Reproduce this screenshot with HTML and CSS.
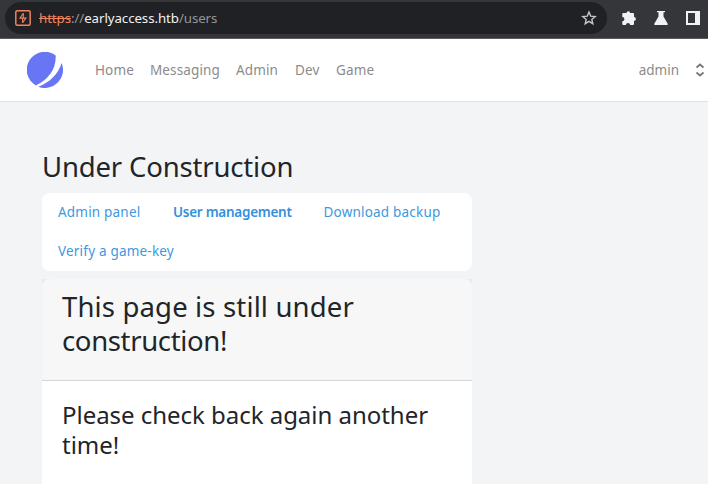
FILE: index.html
```html
<!DOCTYPE html>
<html lang="en">
<head>
<meta charset="utf-8">
<title>Under Construction</title>
<link rel="stylesheet" href="styles.css">
</head>
<body>
<header class="toolbar">
  <div class="address">
    <svg class="site-icon" width="16" height="16" viewBox="0 0 16 16"><rect x=".8" y=".8" width="14.4" height="14.4" rx="1.5" fill="none" stroke="#ee8460" stroke-width="1.5"/><path d="M8.3 3.2 4.9 8.1h6L7.6 12.8M8.3 3v5M7.6 8v5" fill="none" stroke="#ee8460" stroke-width="1.1"/></svg>
    <span class="url"><span class="scheme">https</span>://<span class="host">earlyaccess.htb</span>/users</span>
    <svg class="star" width="16" height="16" viewBox="0 0 16 16"><path d="m8 2 1.7 4.1 4.5.4-3.4 2.9 1 4.3L8 11.4l-3.8 2.3 1-4.3-3.4-2.9 4.5-.4z" fill="none" stroke="#c5c6c9" stroke-width="1.4"/></svg>
  </div>
  <div class="tools">
    <svg width="16" height="16" viewBox="0 0 16 16"><path d="M2.3 3h3.2a1.8 1.8 0 0 1 3.6 0H12q1 0 1 1v3a1.9 1.9 0 0 1 0 3.8V14q0 1-1 1H9.1a2.1 2.1 0 0 0-4.2 0H2.3q-1 0-1-1v-2.7a2.1 2.1 0 0 0 0-4.2V4q0-1 1-1z" fill="#f1f2f4"/></svg>
    <svg width="16" height="16" viewBox="0 0 16 16"><path d="M4 1h8v1.3h-1.5v4.2l4.2 7.2q.5 1.3-.8 1.3H2.1q-1.3 0-.8-1.3l4.2-7.2V2.3H4z" fill="#f1f2f4"/></svg>
    <svg width="16" height="16" viewBox="0 0 16 16"><path fill-rule="evenodd" d="M1 1h14v14H1zM3 3v10h7V3z" fill="#f1f2f4"/></svg>
  </div>
</header>
<nav class="navbar">
  <svg class="logo" width="36" height="36" viewBox="0 0 36 36"><path d="M8.8 33.4A18 18 0 1 1 28.7 3.5C29.2 16.5 22 27.5 8.8 33.4z" fill="#6875f5"/><path d="M11.3 34.7C22.5 30.5 31 22.5 34.6 11A18 18 0 0 1 11.3 34.7z" fill="#6875f5"/></svg>
  <div class="links"><a class="home">Home</a><a class="messaging">Messaging</a><a class="admin">Admin</a><a class="dev">Dev</a><a class="game">Game</a></div>
  <div class="account"><span>admin</span><svg width="10" height="14" viewBox="0 0 10 14"><path d="m1.5 4.5 3.5-3 3.5 3m-7 5 3.5 3 3.5-3" fill="none" stroke="#777" stroke-width="1.8"/></svg></div>
</nav>
<main class="content">
  <h1 class="title">Under Construction</h1>
  <div class="tabs">
    <a class="tab panel">Admin panel</a><a class="tab active">User management</a><a class="tab backup">Download backup</a><a class="tab verify">Verify a game-key</a>
  </div>
  <section class="card">
    <div class="card-frame">
      <h2 class="card-header">This page is still under<br><span class="last-word">construction!</span></h2>
    </div>
    <h3 class="card-body">Please check back again another<br>time!</h3>
  </section>
</main>
</body>
</html>
```
FILE: styles.css
```css
* { box-sizing: border-box; }
body { margin: 0; height: 484px; overflow: hidden; background: #f3f4f6; color: #212529; font-family: "Noto Sans", sans-serif; font-weight: 400; }
h1, h2, h3 { margin: 0; font-weight: 400; }
svg { display: block; flex: none; }
.toolbar { display: flex; height: 39px; background: #35363a; border-bottom: 1px solid #5b5962; }
.address { display: flex; align-items: center; width: 602px; height: 32px; margin: 2px 0 0 5px; padding: 0 10px; border-radius: 16px; background: #202124; }
.url { margin-left: 8px; font-size: 13.3px; line-height: 18px; letter-spacing: -.08px; color: #92969a; white-space: nowrap; }
.scheme { color: #ee8460; text-decoration: line-through; }
.host { color: #f1f2f4; }
.star { margin-left: auto; }
.tools { display: flex; gap: 16px; margin: 10px 0 0 14px; }
.navbar { display: flex; align-items: center; height: 63px; padding: 0 3px 0 27px; background: #fff; border-bottom: 1px solid #dfe1e6; color: #8b8b8b; font-size: 13.5px; }
.links { display: flex; gap: 16px; margin-left: 32px; letter-spacing: .12px; }
.links a { white-space: nowrap; }
.home { width: 39px; }
.messaging { width: 70px; }
.admin { width: 43px; }
.dev { width: 25px; }
.account { display: flex; align-items: center; gap: 16px; margin-left: auto; }
.content { width: 430px; margin-left: 42px; padding-top: 47px; }
.title { height: 44px; font-size: 27.5px; line-height: 35px; letter-spacing: -.17px; white-space: nowrap; }
.tabs { display: flex; flex-wrap: wrap; height: 78px; padding: 0 16px; column-gap: 32px; border-radius: 8px; background: #fff; }
.tab { height: 39px; color: #3d98df; font-size: 13.5px; line-height: 38px; letter-spacing: .2px; white-space: nowrap; }
.panel { width: 83px; }
.active { width: 118.5px; color: #3490dc; font-weight: 650; letter-spacing: -.27px; }
.backup { width: 117px; }
.card { height: 205px; margin-top: 8px; background: #fff; border-radius: 8px 8px 0 0; }
.card-frame { background: #ececee; }
.card-header { height: 102px; padding: 11px 20px; border-bottom: 1px solid #d6d6d6; border-radius: 8px 8px 0 0; background: #f7f7f7; font-size: 27.5px; line-height: 34px; letter-spacing: .15px; white-space: nowrap; }
.last-word { letter-spacing: -.35px; }
.card-body { padding: 19px 20px 0; font-size: 24px; line-height: 30px; letter-spacing: -.03px; white-space: nowrap; }
```
